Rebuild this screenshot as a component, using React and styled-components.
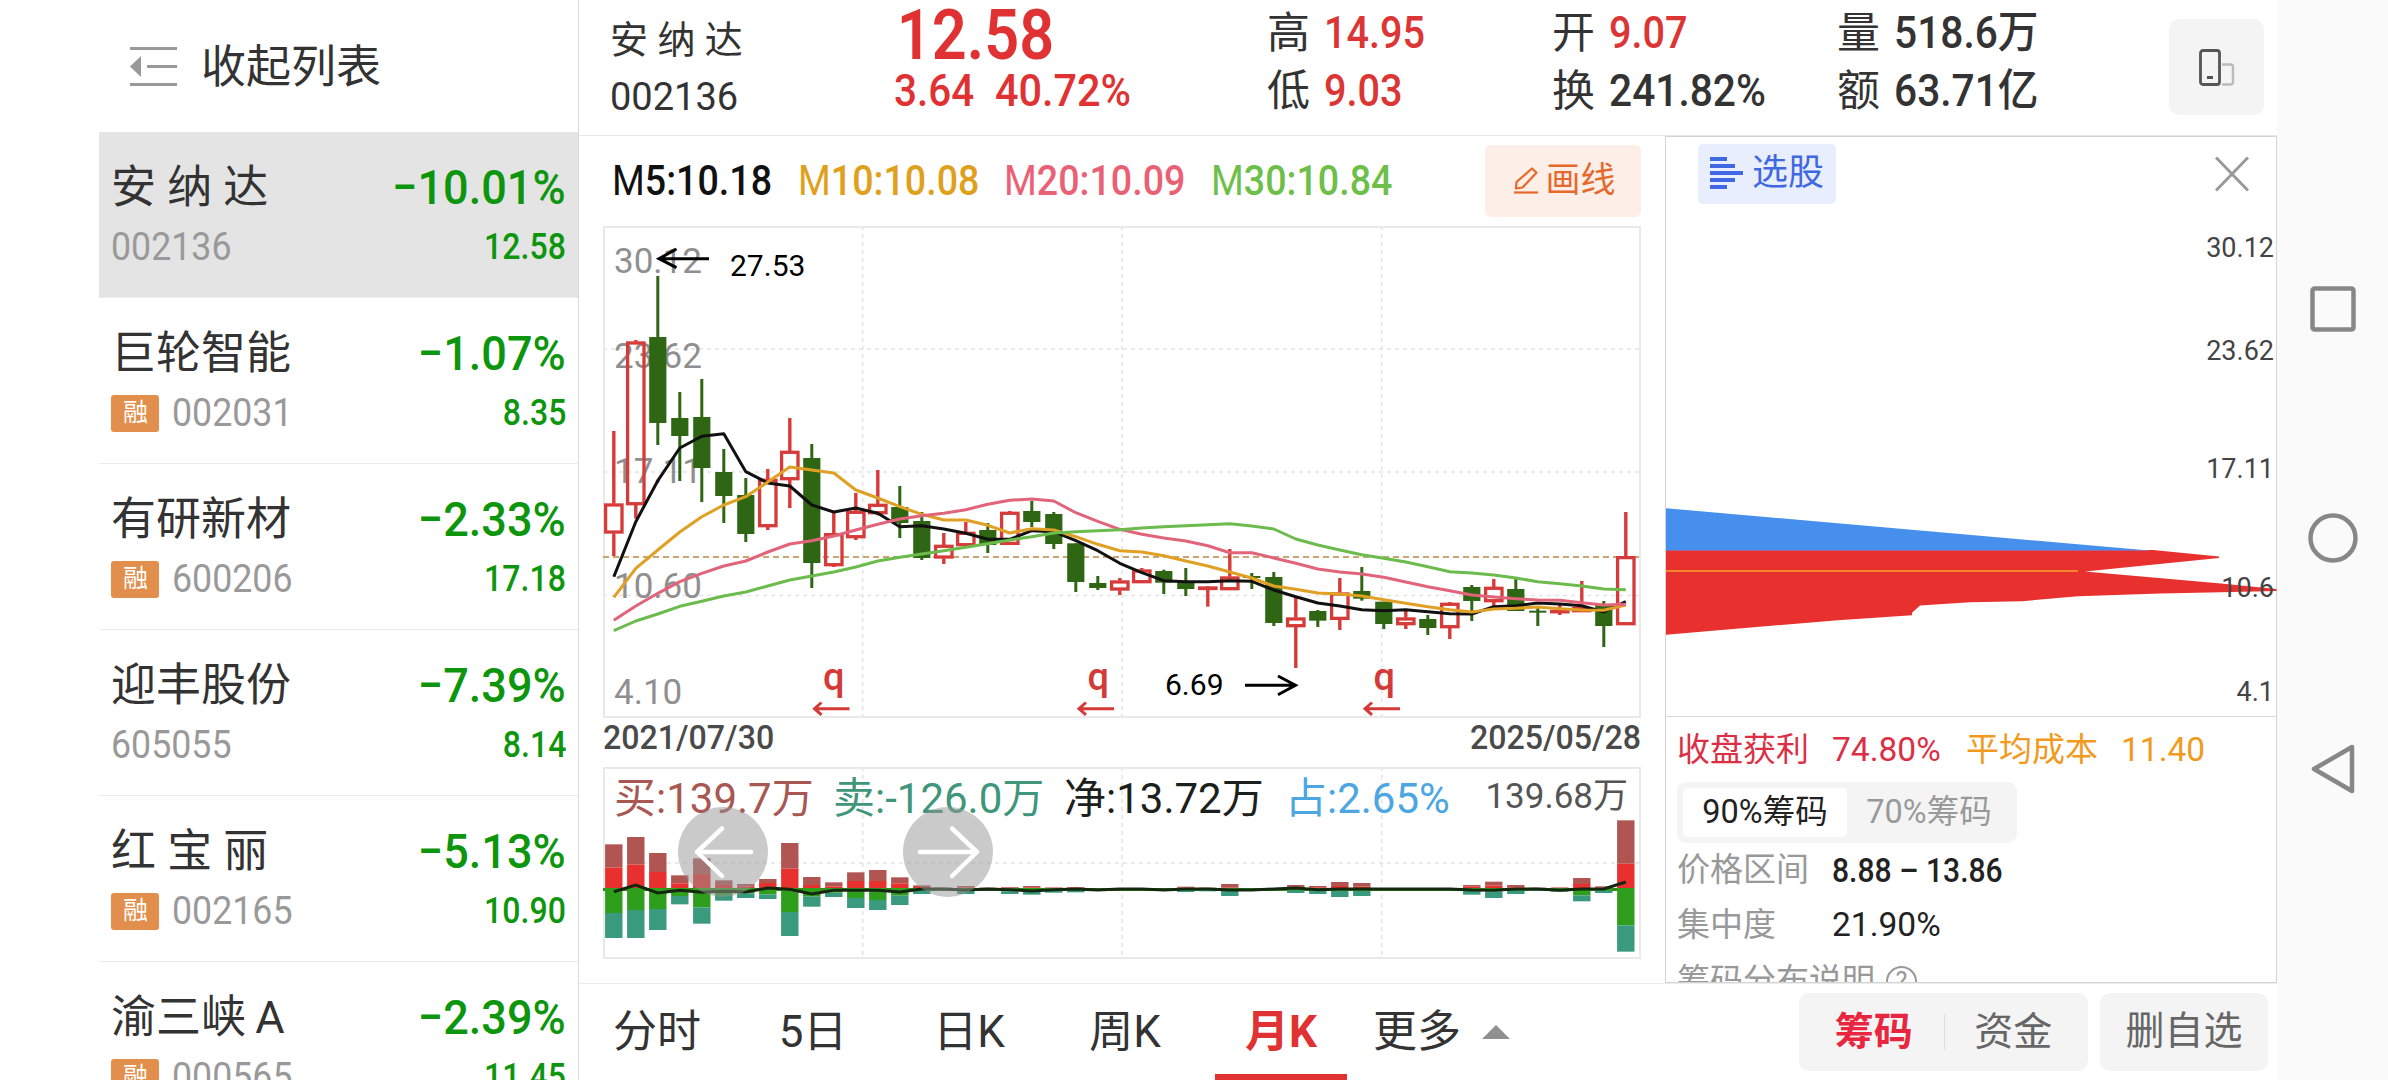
import React from "react";
import styled, { createGlobalStyle } from "styled-components";

const stocks = [
  { name: "安 纳 达", code: "002136", change: "−10.01%", price: "12.58", margin: false },
  { name: "巨轮智能", code: "002031", change: "−1.07%", price: "8.35", margin: true },
  { name: "有研新材", code: "600206", change: "−2.33%", price: "17.18", margin: true },
  { name: "迎丰股份", code: "605055", change: "−7.39%", price: "8.14", margin: false },
  { name: "红 宝 丽", code: "002165", change: "−5.13%", price: "10.90", margin: true },
  { name: "渝三峡\u2009A", code: "000565", change: "−2.39%", price: "11.45", margin: true },
];

const quotes = [
  [
    { label: "高", value: "14.95", up: true },
    { label: "低", value: "9.03", up: true },
  ],
  [
    { label: "开", value: "9.07", up: true },
    { label: "换", value: "241.82%" },
  ],
  [
    { label: "量", value: "518.6万" },
    { label: "额", value: "63.71亿" },
  ],
];

const averages = [
  { text: "M5:10.18", color: "#111111", width: 186 },
  { text: "M10:10.08", color: "#e0a01c", width: 206 },
  { text: "M20:10.09", color: "#ea6075", width: 207 },
  { text: "M30:10.84", color: "#6dbf4a", width: 200 },
];

const tabs = ["分时", "5日", "日K", "周K", "月K"];

// 月K: [涨跌, 最高, 实体上沿, 实体下沿, 最低], 单位 1/3px
const candles = [
  ["r", 663, 881, 970, 1038], ["r", 390, 395, 885, 926], ["g", 198, 381, 639, 705],
  ["g", 546, 624, 678, 813], ["g", 507, 621, 774, 876], ["g", 717, 786, 858, 939],
  ["g", 804, 855, 972, 996], ["r", 777, 807, 951, 960], ["r", 624, 723, 810, 894],
  ["g", 702, 744, 1059, 1134], ["r", 906, 970, 1068, 1071], ["r", 849, 903, 984, 990],
  ["r", 780, 882, 912, 916], ["g", 828, 891, 939, 984], ["g", 906, 933, 1044, 1050],
  ["r", 969, 1005, 1045, 1062], ["r", 936, 966, 1008, 1008], ["g", 939, 960, 1005, 1029],
  ["r", 903, 906, 1004, 1004], ["g", 873, 903, 936, 951], ["g", 906, 912, 1002, 1017],
  ["g", 1000, 1000, 1116, 1146], ["g", 1098, 1119, 1134, 1140], ["r", 1104, 1112, 1141, 1155],
  ["r", 1074, 1079, 1119, 1119], ["g", 1079, 1083, 1118, 1152], ["g", 1074, 1116, 1137, 1158],
  ["r", 1128, 1130, 1138, 1190], ["r", 1017, 1100, 1140, 1140], ["g", 1089, 1098, 1104, 1137],
  ["g", 1086, 1101, 1239, 1248], ["r", 1160, 1223, 1251, 1374], ["g", 1200, 1203, 1232, 1251],
  ["r", 1104, 1148, 1229, 1260], ["g", 1071, 1143, 1166, 1172], ["g", 1175, 1175, 1242, 1257],
  ["r", 1203, 1223, 1245, 1257], ["g", 1215, 1227, 1254, 1275], ["r", 1176, 1179, 1254, 1287],
  ["g", 1125, 1131, 1173, 1233], ["r", 1107, 1131, 1176, 1190], ["g", 1104, 1137, 1203, 1203],
  ["g", 1190, 1202, 1208, 1248], ["r", 1185, 1200, 1208, 1215], ["r", 1113, 1192, 1206, 1206],
  ["g", 1173, 1185, 1248, 1311], ["r", 906, 1039, 1245, 1245],
];

const ma5 = [1100, 935, 812, 714, 679, 671, 785, 819, 828, 885, 906, 894, 910, 950, 947, 957, 970, 988, 988, 962, 965, 992, 1022, 1060, 1088, 1112, 1115, 1115, 1112, 1114, 1140, 1160, 1179, 1188, 1199, 1202, 1199, 1205, 1211, 1212, 1190, 1187, 1179, 1182, 1187, 1206, 1175];
const ma10 = [1162, 1075, 1020, 966, 920, 885, 860, 816, 771, 780, 789, 840, 864, 890, 913, 930, 930, 946, 969, 956, 960, 980, 1003, 1022, 1026, 1037, 1053, 1068, 1086, 1104, 1128, 1138, 1149, 1152, 1158, 1169, 1180, 1190, 1199, 1206, 1197, 1195, 1191, 1196, 1200, 1201, 1185];
const ma20 = [1231, 1188, 1150, 1115, 1090, 1068, 1053, 1026, 1002, 992, 978, 960, 943, 927, 917, 910, 899, 883, 871, 867, 873, 908, 934, 958, 973, 984, 993, 1007, 1028, 1028, 1044, 1060, 1077, 1086, 1092, 1102, 1116, 1130, 1142, 1155, 1161, 1166, 1170, 1171, 1178, 1185, 1183];
const ma30 = [1262, 1233, 1212, 1189, 1174, 1158, 1146, 1128, 1110, 1098, 1086, 1071, 1053, 1042, 1032, 1022, 1012, 1001, 990, 980, 969, 965, 962, 959, 954, 950, 947, 944, 941, 948, 957, 987, 1005, 1020, 1034, 1045, 1056, 1070, 1085, 1089, 1095, 1104, 1115, 1121, 1128, 1137, 1139];

// 买卖柱: [序号, 买上沿, 买分界, 卖分界, 卖下沿]
const flows = [
  [0, 433, 503, 639, 714], [1, 411, 494, 630, 714], [2, 459, 516, 627, 690],
  [3, 526, 550, 588, 613], [4, 475, 522, 622, 671], [5, 541, 555, 585, 602],
  [6, 552, 560, 580, 594], [7, 537, 549, 583, 597], [8, 429, 506, 636, 708],
  [9, 531, 555, 590, 620], [10, 547, 560, 578, 591], [11, 517, 543, 594, 624],
  [12, 510, 543, 600, 630], [13, 532, 550, 587, 615], [14, 556, 561, 572, 582],
  [15, 563, 564, 569, 573], [16, 558, 562, 572, 582], [17, 563, 564, 568, 571],
  [18, 561, 563, 574, 582], [19, 558, 562, 575, 584], [20, 562, 563, 572, 578],
  [21, 561, 563, 571, 577], [26, 560, 563, 571, 576], [27, 563, 564, 570, 574],
  [28, 552, 563, 573, 588], [29, 564, 565, 569, 572], [31, 555, 561, 571, 579],
  [32, 558, 562, 573, 582], [33, 546, 558, 573, 591], [34, 549, 560, 573, 588],
  [39, 555, 560, 572, 584], [40, 545, 557, 574, 594], [41, 555, 562, 572, 582],
  [42, 563, 564, 569, 573], [43, 562, 563, 570, 575], [44, 534, 552, 586, 604],
  [45, 559, 563, 572, 579], [46, 361, 491, 676, 755],
];
const net = [575, 555, 579, 571, 577, 574, 576, 564, 568, 582, 571, 571, 571, 576, 567, 567, 570, 567, 569, 573, 569, 567, 570, 567, 567, 570, 567, 567, 570, 570, 567, 564, 569, 567, 567, 567, 567, 567, 567, 570, 571, 567, 567, 571, 567, 567, 546];

const cx = (i) => 10.8 + i * 22;
const ky = (v) => v / 3 - 16;
const fy = (v) => v / 3 - 67;
const line = (data, y) => data.map((v, i) => `${cx(i)},${y(v).toFixed(1)}`).join(" ");

function CollapseIcon() {
  return (
    <svg width="47" height="39" viewBox="0 0 47 39" fill="#999">
      <rect width="47" height="3" />
      <rect x="17" y="18" width="30" height="3" />
      <rect y="36" width="47" height="3" />
      <path d="M11 9v21L0 19.500z" />
    </svg>
  );
}

function RotateIcon() {
  return (
    <svg width="36" height="37" viewBox="0 0 36 37" fill="none">
      <rect x="1.500" y="1.500" width="19" height="34" rx="2.500" stroke="#555" strokeWidth="2.800" />
      <rect x="8" y="27" width="6" height="3" fill="#555" />
      <path d="M23 15.500h8.500a2.500 2.500 0 0 1 2.500 2.500v15a2.500 2.500 0 0 1-2.500 2.500H23" stroke="#bbb" strokeWidth="2.500" />
    </svg>
  );
}

function PencilIcon() {
  return (
    <svg width="24" height="27" viewBox="0 0 24 27" fill="none" stroke="#e6692c" strokeWidth="2.200" strokeLinejoin="round">
      <path d="M18 1.500l4.500 4.200L8.500 20.500 2 21.500l.5-6.500z" />
      <path d="M0 25.500h24" />
    </svg>
  );
}

function StackIcon() {
  return (
    <svg width="33" height="32" viewBox="0 0 33 32" fill="#3f68e2">
      <rect width="17" height="4" />
      <rect y="7" width="25" height="4" />
      <rect y="14" width="33" height="4" />
      <rect y="21" width="25" height="4" />
      <rect y="28" width="17" height="4" />
    </svg>
  );
}

function GiftMark({ x }) {
  // 除权标记
  return (
    <g>
      <text x={x + 9.500} y="464" fontSize="38" fontWeight="500" fill="#d43a37">q</text>
      <path d={`M${x + 36} 482.700H${x + 1}M${x + 8} 476.500l-7 6.200 7 6.200`} fill="none" stroke="#d43a37" strokeWidth="3" />
    </g>
  );
}

function KLineChart() {
  return (
    <svg width="1038" height="492" viewBox="0 0 1038 492" fontFamily="Roboto, sans-serif">
      <g stroke="#e4e4e4" strokeWidth="1.600" strokeDasharray="4 4">
        <path d="M0 123H1037M0 246H1037M0 369.500H1037" />
        <path d="M259.700 0V491M519 0V491M778.700 0V491" />
      </g>
      <rect x="1" y="1" width="1036" height="490" fill="none" stroke="#e9e9e9" strokeWidth="2" />
      <g fontSize="35" fill="#8f8f8f">
        <text x="11" y="47">30.12</text>
        <text x="11" y="141.700">23.62</text>
        <text x="11" y="256.700">17.11</text>
        <text x="11" y="372">10.60</text>
        <text x="11" y="477.700">4.10</text>
      </g>
      <path d="M0 331H1038" stroke="#c9a573" strokeWidth="2" strokeDasharray="6 4" />
      {candles.map(([dir, high, top, bottom, low], i) =>
        dir === "g" ? (
          <g key={i} fill="#2e6614">
            <rect x={cx(i) - 1.500} y={ky(high)} width="3" height={(low - high) / 3} />
            <rect x={cx(i) - 8.600} y={ky(top)} width="17.200" height={(bottom - top) / 3} />
          </g>
        ) : (
          <g key={i} fill="#d63b3a">
            <rect x={cx(i) - 1.700} y={ky(high)} width="3.400" height={Math.max(0, (top - high) / 3)} />
            <rect x={cx(i) - 1.700} y={ky(bottom)} width="3.400" height={Math.max(0, (low - bottom) / 3)} />
            <rect
              x={cx(i) - 8.200}
              y={ky(top) + 1.300}
              width="16.400"
              height={Math.max(0.500, (bottom - top) / 3 - 2.600)}
              fill="none"
              stroke="#d63b3a"
              strokeWidth="3.300"
            />
          </g>
        )
      )}
      <g fill="none" strokeWidth="3" strokeLinejoin="round">
        <polyline points={line(ma5, ky)} stroke="#111" />
        <polyline points={line(ma10, ky)} stroke="#dfa024" />
        <polyline points={line(ma20, ky)} stroke="#e2647a" />
        <polyline points={line(ma30, ky)} stroke="#6cbb4d" />
      </g>
      <g stroke="#000" strokeWidth="3" fill="none">
        <path d="M106 32.700H56M73.500 23L56 32.700l17.500 9" />
        <path d="M642 459.300h50M675 450l17.500 9.300-17.500 9.400" />
      </g>
      <g fontSize="30" fill="#000">
        <text x="127" y="50">27.53</text>
        <text x="562" y="468.700">6.69</text>
      </g>
      <GiftMark x={210.500} />
      <GiftMark x={475} />
      <GiftMark x={761} />
    </svg>
  );
}

function FlowChart() {
  return (
    <svg width="1038" height="192" viewBox="0 0 1038 192">
      <g stroke="#e4e4e4" strokeWidth="1.600" strokeDasharray="4 4">
        <path d="M0 96H1037" />
        <path d="M259.700 0V191M519 0V191M778.700 0V191" />
      </g>
      <rect x="1" y="1" width="1036" height="190" fill="none" stroke="#e9e9e9" strokeWidth="2" />
      <path d="M0 122.500H1030" stroke="#3b8a1c" strokeWidth="3" />
      {flows.map(([i, top, up, down, bottom]) => (
        <g key={i}>
          <rect x={cx(i) - 8.700} y={fy(top)} width="17.400" height={(up - top) / 3} fill="#b05552" />
          <rect x={cx(i) - 8.700} y={fy(up)} width="17.400" height={Math.max(0, (564 - up) / 3)} fill="#e8302f" />
          <rect x={cx(i) - 8.700} y={fy(564)} width="17.400" height={(down - 564) / 3} fill="#2f9e1d" />
          <rect x={cx(i) - 8.700} y={fy(down)} width="17.400" height={(bottom - down) / 3} fill="#3a9a7d" />
        </g>
      ))}
      <polyline points={line(net, fy)} fill="none" stroke="#14280f" strokeWidth="3" />
    </svg>
  );
}

function ChipChart() {
  return (
    <svg width="611" height="400" viewBox="0 0 611 400">
      <path d="M0 125.200L483 167.500H0z" fill="#468fec" />
      <path
        d="M0 167H487L553 173.500v1.500L419 188.500l136 12 55.500 5.500v2L555 209.200l-61 1.300-82 2.700-56 5-52 1-50 3.300-8 7.300v2.400l-74 5L0 251.800z"
        fill="#e8302f"
      />
      <path d="M0 167.500H483" stroke="#a0669a" strokeWidth="1" />
      <path d="M0 188H412" stroke="#f3862d" strokeWidth="2" />
    </svg>
  );
}

function ArrowIcon({ flip }) {
  return (
    <svg width="90" height="90" viewBox="0 0 90 90" fill="none" stroke="#fff" strokeWidth="4.500" strokeLinecap="round" strokeLinejoin="round">
      <path d={flip ? "M17 45h56M49 21.500L74 45 49 69" : "M73 45H19M44 21.500L19 45l25 24"} />
    </svg>
  );
}

function App() {
  return (
    <Screen>
      <GlobalStyle />
      <Sidebar>
        <SidebarHead>
          <CollapseIcon />
          <span>收起列表</span>
        </SidebarHead>
        {stocks.map((item, index) => (
          <StockRow key={item.code} $active={index === 0}>
            <StockLine>
              <StockName>{item.name}</StockName>
              <StockChange>{item.change}</StockChange>
            </StockLine>
            <StockLine>
              <StockCode>
                {item.margin && <Badge>融</Badge>}
                <Code>{item.code}</Code>
              </StockCode>
              <StockPrice>{item.price}</StockPrice>
            </StockLine>
          </StockRow>
        ))}
      </Sidebar>

      <Main>
        <QuoteBar>
          <TitleBlock>
            <div>安 纳 达</div>
            <div>002136</div>
          </TitleBlock>
          <PriceBlock>
            <BigPrice>12.58</BigPrice>
            <ChangeLine>
              <Diff>3.64</Diff>
              <Percent>40.72%</Percent>
            </ChangeLine>
          </PriceBlock>
          {quotes.map((column, index) => (
            <QuoteColumn key={index}>
              {column.map((item) => (
                <QuoteItem key={item.label}>
                  <span>{item.label}</span>
                  <QuoteValue $up={item.up}>{item.value}</QuoteValue>
                </QuoteItem>
              ))}
            </QuoteColumn>
          ))}
          <RotateButton>
            <RotateIcon />
          </RotateButton>
        </QuoteBar>

        <Body>
          <ChartColumn>
            <AverageBar>
              {averages.map((item) => (
                <Average key={item.text} $color={item.color} $width={item.width}>
                  <span>{item.text[0]}</span>
                  {item.text.slice(1)}
                </Average>
              ))}
              <DrawButton>
                <PencilIcon />
                画线
              </DrawButton>
            </AverageBar>
            <KLineChart />
            <DateRow>
              <DateText $origin="left">2021/07/30</DateText>
              <DateText $origin="right">2025/05/28</DateText>
            </DateRow>
            <FlowPanel>
              <FlowChart />
              <FlowLegend>
                <FlowText $color="#a95753" $width={219}>买:139.7万</FlowText>
                <FlowText $color="#3f967a" $width={231}>卖:-126.0万</FlowText>
                <FlowText $color="#1c201c" $width={221}>净:13.72万</FlowText>
                <FlowText $color="#4ba6e2" $width={170}>占:2.65%</FlowText>
                <FlowMax>139.68万</FlowMax>
              </FlowLegend>
              <PanButton $left={75}>
                <ArrowIcon />
              </PanButton>
              <PanButton $left={300}>
                <ArrowIcon flip />
              </PanButton>
            </FlowPanel>
          </ChartColumn>

          <ChipPanel>
            <ChipHead>
              <PickButton>
                <StackIcon />
                选股
              </PickButton>
              <svg width="34" height="36" viewBox="0 0 34 36" stroke="#999" strokeWidth="3">
                <path d="M1 1.500l32 33M33 1.500l-32 33" />
              </svg>
            </ChipHead>
            <ChipBody>
              <ChipChart />
              <ScaleLabel $top={22}>30.12</ScaleLabel>
              <ScaleLabel $top={125}>23.62</ScaleLabel>
              <ScaleLabel $top={243}>17.11</ScaleLabel>
              <ScaleLabel $top={362}>10.6</ScaleLabel>
              <ScaleLabel $top={466}>4.1</ScaleLabel>
            </ChipBody>
            <ChipInfo>
              <InfoRow $height={65}>
                <InfoPair $color="#dc2f45">
                  <span>收盘获利</span>
                  <InfoValue>74.80%</InfoValue>
                </InfoPair>
                <InfoPair $color="#f19a1e">
                  <span>平均成本</span>
                  <InfoValue>11.40</InfoValue>
                </InfoPair>
              </InfoRow>
              <Segment>
                <SegmentItem $active>90%筹码</SegmentItem>
                <SegmentItem>70%筹码</SegmentItem>
              </Segment>
              <InfoRow $height={53}>
                <InfoLabel>价格区间</InfoLabel>
                <PriceRange>8.88 – 13.86</PriceRange>
              </InfoRow>
              <InfoRow $height={58}>
                <InfoLabel>集中度</InfoLabel>
                <InfoValue>21.90%</InfoValue>
              </InfoRow>
              <HelpRow>
                筹码分布说明
                <HelpIcon>?</HelpIcon>
              </HelpRow>
            </ChipInfo>
          </ChipPanel>
        </Body>

        <BottomBar>
          {tabs.map((tab) => (
            <Tab key={tab} $active={tab === "月K"}>
              {tab}
            </Tab>
          ))}
          <MoreTab>
            更多
            <svg width="28" height="14" viewBox="0 0 28 14">
              <path d="M14 0l14 14H0z" fill="#909090" />
            </svg>
          </MoreTab>
          <ActionGroup>
            <Action $active>筹码</Action>
            <Action>资金</Action>
          </ActionGroup>
          <RemoveButton>删自选</RemoveButton>
        </BottomBar>
      </Main>

      <NavStrip>
        <svg width="46" height="46" viewBox="0 0 46 46" fill="none" stroke="#878787" strokeWidth="4.500">
          <rect x="2.500" y="2.500" width="41" height="41" rx="2" />
        </svg>
        <svg width="50" height="50" viewBox="0 0 50 50" fill="none" stroke="#878787" strokeWidth="4.500">
          <circle cx="25" cy="25" r="22.500" />
        </svg>
        <svg width="46" height="52" viewBox="0 0 46 52" fill="none" stroke="#878787" strokeWidth="4.500" strokeLinejoin="round">
          <path d="M42 4v44L4 26z" />
        </svg>
      </NavStrip>
    </Screen>
  );
}

const GlobalStyle = createGlobalStyle`
  * {
    box-sizing: border-box;
  }
  body {
    margin: 0;
    overflow: hidden;
    background: #fff;
    font-family: Roboto, "Noto Sans CJK SC", sans-serif;
  }
  svg {
    display: block;
    flex: none;
  }
`;

const Screen = styled.div`
  display: flex;
  width: 2388px;
  height: 1080px;
  padding-left: 99px;
  overflow: hidden;
  color: #333;
  white-space: nowrap;
`;

const Sidebar = styled.aside`
  flex: none;
  width: 480px;
  height: 1080px;
  overflow: hidden;
  border-right: 1px solid #d9d9d9;
`;

const SidebarHead = styled.div`
  display: flex;
  align-items: center;
  gap: 24px;
  height: 132px;
  padding-left: 31px;
  font-size: 45px;
  line-height: 60px;

  span {
    padding-top: 3px;
  }
`;

const StockRow = styled.div`
  height: 166px;
  padding: 25px 12px 0 12px;
  background: ${(props) => (props.$active ? "#e4e4e4" : "#fff")};
  border-bottom: 1px solid #ececec;
`;

const StockLine = styled.div`
  display: flex;
  align-items: center;
  justify-content: space-between;
  height: 60px;
`;

const StockName = styled.span`
  padding-top: 2px;
  font-size: 45px;
  line-height: 60px;
`;

const StockChange = styled.span`
  padding-top: 2px;
  color: #0d960d;
  font-size: 49px;
  font-weight: 500;
  line-height: 60px;
  transform: scaleX(0.92);
  transform-origin: right;
`;

const StockCode = styled.div`
  display: flex;
  align-items: center;
  gap: 13px;
`;

const Badge = styled.span`
  width: 48px;
  height: 37px;
  padding-left: 1px;
  border-radius: 3px;
  background: #e28e4c;
  color: #fff;
  font-size: 25px;
  line-height: 35px;
  text-align: center;
`;

const Code = styled.span`
  color: #999;
  font-size: 38px;
  line-height: 60px;
  transform: scaleX(0.94);
  transform-origin: left;
`;

const StockPrice = styled.span`
  color: #0d960d;
  font-size: 36px;
  font-weight: 500;
  transform: scaleX(0.89);
  transform-origin: right;
`;

const Main = styled.main`
  flex: none;
  display: flex;
  flex-direction: column;
  width: 1698px;
`;

const QuoteBar = styled.header`
  display: flex;
  height: 136px;
  padding-left: 31px;
  border-bottom: 1px solid #e8e8e8;
`;

const TitleBlock = styled.div`
  width: 285px;
  padding-top: 12px;
  font-size: 38px;
  line-height: 57px;
`;

const PriceBlock = styled.div`
  width: 372px;
  color: #e03233;
  font-weight: 500;
`;

const BigPrice = styled.div`
  padding-left: 2px;
  font-size: 70px;
  font-weight: 600;
  line-height: 70px;
  transform: scaleX(0.875);
  transform-origin: left;
`;

const ChangeLine = styled.div`
  display: flex;
  margin-left: -1px;
  font-size: 44px;
  line-height: 42px;
`;

const Diff = styled.span`
  width: 101px;
  transform: scaleX(0.92);
  transform-origin: left;
`;

const Percent = styled.span`
  transform: scaleX(0.94);
  transform-origin: left;
`;

const QuoteColumn = styled.div`
  width: 285px;
  padding-top: 4px;

  &:nth-last-child(2) {
    width: 332px;
  }
`;

const QuoteItem = styled.div`
  display: flex;
  gap: 14px;
  height: 58px;
  font-size: 43px;
  line-height: 58px;
`;

const QuoteValue = styled.span`
  color: ${(props) => (props.$up ? "#dc3535" : "#333")};
  font-size: 44px;
  font-weight: 500;
  transform: scaleX(${(props) => (props.$up ? 0.9 : 0.925)});
  transform-origin: left;
`;

const RotateButton = styled.button`
  display: flex;
  align-items: center;
  justify-content: center;
  width: 95px;
  height: 96px;
  margin-top: 19px;
  padding: 0;
  border: 0;
  border-radius: 10px;
  background: #f4f4f4;
`;

const Body = styled.section`
  display: flex;
  height: 847px;
`;

const ChartColumn = styled.div`
  width: 1086px;
  padding-left: 24px;
`;

const AverageBar = styled.div`
  display: flex;
  align-items: center;
  height: 90px;
  padding-left: 9px;
`;

const Average = styled.span`
  flex: none;
  width: ${(props) => props.$width}px;
  color: ${(props) => props.$color};
  font-size: 42px;
  font-weight: 500;
  line-height: 60px;
  transform: scaleX(0.895);
  transform-origin: left;

  span {
    font-weight: 400;
  }
`;

const DrawButton = styled.button`
  display: flex;
  align-items: center;
  justify-content: center;
  gap: 7px;
  width: 156px;
  height: 72px;
  margin-left: 74px;
  padding: 0 0 1px 4px;
  border: 0;
  border-radius: 6px;
  background: #feeee8;
  color: #e6692c;
  font: 400 35px/60px Roboto, "Noto Sans CJK SC", sans-serif;
`;

const DateRow = styled.div`
  display: flex;
  justify-content: space-between;
  width: 1038px;
  height: 49px;
`;

const DateText = styled.span`
  color: #4a4a4a;
  font-size: 34px;
  font-weight: 500;
  line-height: 38px;
  transform: scaleX(0.945);
  transform-origin: ${(props) => props.$origin};
`;

const FlowPanel = styled.div`
  position: relative;
  width: 1038px;
  height: 192px;
`;

const FlowLegend = styled.div`
  position: absolute;
  top: 6px;
  left: 11px;
  display: flex;
  width: 1014px;
  line-height: 52px;
`;

const FlowText = styled.span`
  flex: none;
  width: ${(props) => props.$width}px;
  color: ${(props) => props.$color};
  font-size: 42px;
`;

const FlowMax = styled.span`
  margin-left: auto;
  color: #555;
  font-size: 35px;
  line-height: 47px;
`;

const PanButton = styled.button`
  position: absolute;
  top: 40px;
  left: ${(props) => props.$left}px;
  width: 90px;
  height: 90px;
  padding: 0;
  border: 0;
  border-radius: 50%;
  background: rgba(150, 150, 150, 0.5);
`;

const ChipPanel = styled.aside`
  display: flex;
  flex-direction: column;
  width: 612px;
  border: 1px solid #d4d4d4;
`;

const ChipHead = styled.div`
  display: flex;
  align-items: center;
  justify-content: space-between;
  height: 73px;
  padding: 0 27px 0 32px;
`;

const PickButton = styled.button`
  display: flex;
  align-items: center;
  gap: 9px;
  width: 138px;
  height: 60px;
  padding: 0 0 1px 12px;
  border: 0;
  border-radius: 5px;
  background: #e8eefe;
  color: #4068e0;
  font: 400 36px/56px Roboto, "Noto Sans CJK SC", sans-serif;
`;

const ChipBody = styled.div`
  position: relative;
  height: 507px;
  padding-top: 173px;
  border-bottom: 1px solid #d9d9d9;
`;

const ScaleLabel = styled.span`
  position: absolute;
  top: ${(props) => props.$top}px;
  right: 2px;
  color: #444;
  font-size: 27px;
  line-height: 32px;
`;

const ChipInfo = styled.div`
  flex: 1;
  min-height: 0;
  overflow: hidden;
  padding-left: 11px;
`;

const InfoRow = styled.div`
  display: flex;
  align-items: center;
  height: ${(props) => props.$height}px;
  font-size: 33px;
  line-height: 48px;
`;

const InfoPair = styled.div`
  display: flex;
  gap: 23px;
  width: 289px;
  color: ${(props) => props.$color};
`;

const Segment = styled.div`
  display: flex;
  width: 340px;
  height: 61px;
  padding: 6px;
  border-radius: 9px;
  background: #f4f4f4;
`;

const SegmentItem = styled.button`
  width: 164px;
  height: 49px;
  padding: 0;
  border: 0;
  border-radius: 5px;
  background: ${(props) => (props.$active ? "#fff" : "transparent")};
  color: ${(props) => (props.$active ? "#222" : "#999")};
  font: 400 32.500px/49px Roboto, "Noto Sans CJK SC", sans-serif;
`;

const InfoLabel = styled.span`
  width: 155px;
  color: #999;
`;

const InfoValue = styled.span`
  color: ${(props) => (props.$color ? props.$color : "inherit")};
  font-size: 33.500px;

  ${InfoLabel} + & {
    color: #222;
  }
`;

const PriceRange = styled.span`
  color: #222;
  font-size: 34px;
  font-weight: 500;
  transform: scaleX(0.885);
  transform-origin: left;
`;

const HelpRow = styled.div`
  display: flex;
  align-items: center;
  gap: 11px;
  height: 54px;
  color: #999;
  font-size: 33px;
  line-height: 48px;
`;

const HelpIcon = styled.span`
  width: 31px;
  height: 31px;
  border: 2px solid #999;
  border-radius: 50%;
  font-size: 25px;
  line-height: 28px;
  text-align: center;
`;

const BottomBar = styled.footer`
  display: flex;
  align-items: center;
  height: 97px;
  padding-right: 9px;
  border-top: 1px solid #ececec;
`;

const Tab = styled.div`
  position: relative;
  width: 156px;
  color: ${(props) => (props.$active ? "#e03233" : "#333")};
  font-size: 44px;
  font-weight: ${(props) => (props.$active ? 700 : 400)};
  line-height: 96px;
  text-align: center;

  &::after {
    content: "";
    display: ${(props) => (props.$active ? "block" : "none")};
    position: absolute;
    left: 12px;
    bottom: 0;
    width: 132px;
    height: 6px;
    background: #e03233;
  }
`;

const MoreTab = styled.div`
  display: flex;
  align-items: center;
  gap: 21px;
  padding-left: 14px;
  font-size: 44px;
  line-height: 96px;
`;

const ActionGroup = styled.div`
  display: flex;
  align-items: center;
  width: 289px;
  height: 78px;
  margin: 0 0 1px auto;
  border-radius: 10px;
  background: #f4f4f4;
`;

const Action = styled.button`
  width: 145px;
  height: 36px;
  padding: 0 0 0 ${(props) => (props.$active ? "5px" : "0")};
  border: 0;
  background: none;
  color: ${(props) => (props.$active ? "#e8263f" : "#666")};
  font: ${(props) => (props.$active ? 700 : 400)} 39px/36px Roboto, "Noto Sans CJK SC", sans-serif;

  & + & {
    padding-right: 6px;
    border-left: 1px solid #ddd;
  }
`;

const RemoveButton = styled.button`
  width: 168px;
  height: 78px;
  margin: 0 0 1px 12px;
  padding: 0 0 1px;
  border: 0;
  border-radius: 10px;
  background: #f4f4f4;
  color: #666;
  font: 400 39px/60px Roboto, "Noto Sans CJK SC", sans-serif;
`;

const NavStrip = styled.nav`
  flex: 1;
  display: flex;
  flex-direction: column;
  align-items: center;
  justify-content: space-between;
  padding: 286px 0 285px;
  background: #fafafa;
`;

export default App;
